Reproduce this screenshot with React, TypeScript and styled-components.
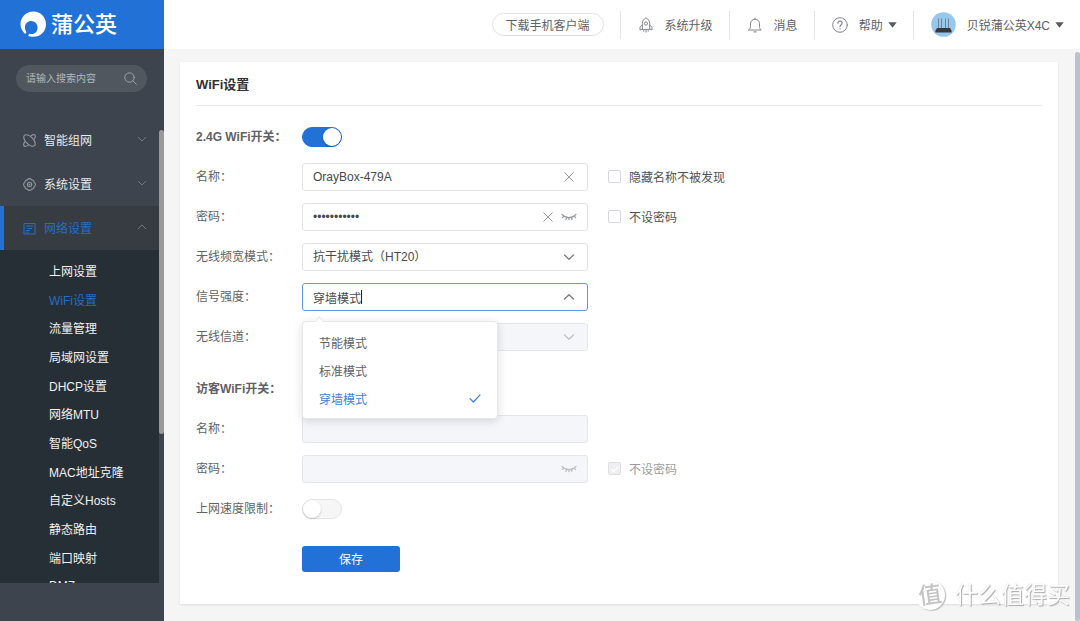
import React, { useState } from "react";
import styled, { createGlobalStyle, css } from "styled-components";

const font = '"Liberation Sans", "Noto Sans CJK SC", sans-serif';
const blue = "#2171d6";

const Global = createGlobalStyle`
  *, *::before, *::after { box-sizing: border-box; }
  body { margin: 0; font-family: ${font}; font-size: 12px; color: #606266; background: #f5f5f5; }
  button, input, select { font: inherit; color: inherit; margin: 0; }
  ul { list-style: none; margin: 0; padding: 0; }
  a { color: inherit; text-decoration: none; }
  svg { display: block; flex: none; }
`;

const Shell = styled.div`
  display: flex;
  height: 100vh;
  overflow: hidden;
`;

/* ---------- sidebar ---------- */

const Sidebar = styled.aside`
  display: flex;
  flex-direction: column;
  flex: none;
  width: 164px;
  background: #3d444d;
`;

const Brand = styled.a`
  display: flex;
  align-items: center;
  gap: 4px;
  flex: none;
  height: 49px;
  padding-left: 20px;
  background: ${blue};
  color: #fff;
  font-size: 22px;
  line-height: 28px;
  font-weight: 500;
`;

const SearchBox = styled.label`
  display: flex;
  align-items: center;
  flex: none;
  height: 27px;
  margin: 16px 17px 26px 16px;
  padding: 0 10px;
  border-radius: 14px;
  background: #50575f;
  color: #9da2a7;
`;

const SearchInput = styled.input`
  flex: 1;
  min-width: 0;
  padding: 0;
  border: 0;
  outline: 0;
  background: none;
  font-size: 10px;
  &::placeholder { color: #b4b8bc; }
`;

const MenuArea = styled.div`
  display: flex;
  flex: 1;
  min-height: 0;
  margin-bottom: 38px;
`;

const Menu = styled.nav`
  flex: 1;
  min-width: 0;
  overflow: hidden;
`;

const MenuTrack = styled.div`
  width: 5px;
  padding-top: 12px;
`;

const MenuThumb = styled.div`
  height: 67%;
  border-radius: 3px;
  background: #999;
`;

const MenuItem = styled.button<{ $active?: boolean }>`
  display: flex;
  align-items: center;
  gap: 8px;
  width: 100%;
  height: 44px;
  padding: 0 12px 2px ${(p) => (p.$active ? 19 : 23)}px;
  border: 0;
  border-left: ${(p) => (p.$active ? `4px solid ${blue}` : "0")};
  background: ${(p) => (p.$active ? "#363c42" : "none")};
  color: ${(p) => (p.$active ? "#286cc8" : "#e8eaec")};
  text-align: left;
`;

const MenuText = styled.span`
  flex: 1;
`;

const MenuIcon = styled.span<{ $active?: boolean }>`
  padding-top: 2px;
  color: ${(p) => (p.$active ? "#286cc8" : "#92979d")};
`;

const MenuArrow = styled.span`
  color: #747b82;
`;

const SubMenu = styled.ul`
  display: flex;
  flex-direction: column;
  height: 350px;
  padding-top: 6px;
  background: #272f36;
`;

const SubItem = styled.li<{ $active?: boolean }>`
  display: flex;
  align-items: center;
  flex: 1;
  padding-left: 49px;
  color: ${(p) => (p.$active ? "#286cc8" : "#f0f1f2")};
`;

/* ---------- top bar ---------- */

const Main = styled.div`
  display: flex;
  flex-direction: column;
  flex: 1;
  min-width: 0;
`;

const TopBar = styled.header`
  display: flex;
  align-items: center;
  justify-content: flex-end;
  flex: none;
  height: 49px;
  background: #fff;
  white-space: nowrap;
`;

const Download = styled.button`
  height: 23px;
  margin-right: 16px;
  padding: 0 13px 1px;
  border: 1px solid #dfe1e4;
  border-radius: 12px;
  background: #fff;
`;

const TopItem = styled.button`
  display: flex;
  align-items: center;
  gap: 11px;
  height: 28px;
  padding: 0 16px 0 17px;
  border: 0;
  border-left: 1px solid #e4e6e9;
  background: none;
`;

const TopIcon = styled.span`
  color: #85878b;
`;

const WithCaret = styled.span`
  display: flex;
  align-items: center;
  gap: 5px;
`;

/* ---------- content ---------- */

const Content = styled.main`
  display: flex;
  flex: 1;
  min-height: 0;
`;

const Scroller = styled.div`
  flex: 1;
  min-width: 0;
  padding: 13px 17px 0 16px;
  overflow: hidden;
`;

const PageTrack = styled.div`
  display: flex;
  width: 5px;
  padding-top: 3px;
`;

const PageThumb = styled.div`
  flex: 1;
  border-radius: 3px;
  background: #b5c4d0;
`;

const Card = styled.section`
  padding: 0 16px 32px;
  background: #fff;
  box-shadow: 0 1px 2px rgba(0, 0, 0, 0.1);
`;

const CardTitle = styled.h1`
  margin: 0 0 17px;
  padding: 13px 0 10px;
  border-bottom: 1px solid #e8eaec;
  color: #303133;
  font-size: 13px;
  line-height: 20px;
  font-weight: 600;
`;

const Form = styled.form`
  display: flex;
  flex-direction: column;
  gap: 12px;
`;

const Row = styled.div<{ $head?: boolean; $guest?: boolean }>`
  display: grid;
  grid-template-columns: 106px minmax(0, 286px) 1fr;
  align-items: center;
  min-height: 28px;
  ${(p) => p.$head && css`font-weight: 600;`}
  ${(p) => p.$guest && css`margin-top: 12px;`}
`;

const RowLabel = styled.label`
  align-self: start;
  line-height: 28px;
`;

const Switch = styled.input`
  appearance: none;
  display: flex;
  width: 40px;
  height: 20px;
  border: 1px solid #e3e4e6;
  border-radius: 10px;
  background: #f6f6f6;
  &::after {
    content: "";
    width: 18px;
    height: 18px;
    border-radius: 50%;
    background: #fff;
    box-shadow: 0 1px 2px rgba(0, 0, 0, 0.2);
  }
  &:checked { justify-content: flex-end; border-color: ${blue}; background: ${blue}; }
`;

const fieldBox = css`
  display: flex;
  align-items: center;
  gap: 5px;
  width: 100%;
  height: 28px;
  padding: 0 10px;
  border: 1px solid #e2e4e8;
  border-radius: 3px;
  background: #fff;
  color: #484a4d;
`;

const Field = styled.div<{ $disabled?: boolean }>`
  ${fieldBox}
  ${(p) => p.$disabled && css`background: #f5f6fa; border-color: #e4e6ec;`}
`;

const TextInput = styled.input`
  flex: 1;
  min-width: 0;
  padding: 0;
  border: 0;
  outline: 0;
  background: none;
`;

const Select = styled.select`
  appearance: none;
  flex: 1;
  min-width: 0;
  padding: 0;
  border: 0;
  outline: 0;
  background: none;
`;

const Combo = styled.div`
  position: relative;
`;

const ComboButton = styled.button`
  ${fieldBox}
  border-color: #5e9ae3;
  text-align: left;
`;

const ComboValue = styled.span`
  display: flex;
  align-items: center;
  flex: 1;
`;

const TextCaret = styled.span`
  width: 1px;
  height: 14px;
  background: #222;
`;

const Suffix = styled.span<{ $light?: boolean }>`
  display: flex;
  justify-content: center;
  width: 16px;
  color: ${(p) => (p.$light ? "#bfc2c7" : "#7d8085")};
`;

const IconButton = styled.button`
  display: flex;
  justify-content: center;
  width: 16px;
  padding: 0;
  border: 0;
  background: none;
  color: #96999e;
  &:disabled { color: #b9bcc2; }
`;

const Popup = styled.ul`
  position: absolute;
  z-index: 2;
  top: calc(100% + 10px);
  left: 0;
  width: 196px;
  padding: 6px 0;
  border: 1px solid #e6e8ec;
  border-radius: 4px;
  background: #fff;
  box-shadow: 0 2px 10px rgba(0, 0, 0, 0.14);
  &::before {
    content: "";
    position: absolute;
    top: -4px;
    left: 13px;
    width: 7px;
    height: 7px;
    border: 1px solid #e6e8ec;
    border-width: 1px 0 0 1px;
    background: #fff;
    transform: rotate(45deg);
  }
`;

const Option = styled.li<{ $on?: boolean }>`
  display: flex;
  align-items: center;
  justify-content: space-between;
  height: 28px;
  padding: 0 16px;
  color: ${(p) => (p.$on ? "#3d7edb" : "#606266")};
`;

const Check = styled.label<{ $disabled?: boolean }>`
  display: flex;
  align-items: center;
  gap: 8px;
  margin-left: 20px;
  padding-bottom: 2px;
  color: ${(p) => (p.$disabled ? "#9a9da1" : "#505256")};
`;

const CheckInput = styled.input`
  appearance: none;
  display: grid;
  place-items: center;
  width: 13px;
  height: 13px;
  border: 1px solid #d5d7db;
  border-radius: 2px;
  background: #fff;
  &:disabled { background: #efefef; border-color: #dddfe2; }
  &:disabled:checked::after {
    content: "";
    width: 4px;
    height: 8px;
    border: 1px solid #fff;
    border-width: 0 1px 1px 0;
    transform: rotate(45deg);
  }
`;

const Save = styled.button`
  width: 98px;
  height: 26px;
  margin: 11px 0 0 106px;
  padding: 0 0 2px;
  border: 0;
  border-radius: 3px;
  background: ${blue};
  color: #fff;
`;

/* ---------- watermark ---------- */

const Watermark = styled.div`
  position: fixed;
  z-index: 3;
  right: 10px;
  bottom: 11px;
  display: flex;
  align-items: center;
  gap: 10px;
  color: #fff;
  font-size: 23px;
  line-height: 30px;
  text-shadow: 1px 1px 1px #aaa, 0 0 1px #ccc;
  pointer-events: none;
`;

const WatermarkBadge = styled.span`
  display: grid;
  place-items: center;
  width: 30px;
  height: 30px;
  border-radius: 50%;
  background: #fff;
  box-shadow: 1px 1px 1px #bbb;
  color: #c4c4c4;
  font-weight: 500;
  text-shadow: none;
  transform: rotate(-8deg);
`;

/* ---------- icons ---------- */

const stroke = { fill: "none", stroke: "currentColor", strokeLinecap: "round", strokeLinejoin: "round" } as const;

const LogoMark = () => (
  <svg width="27" height="27" viewBox="0 0 27 27" aria-hidden="true">
    <path
      fill="#fff"
      d="M13.3.5C20.5.5 26 6 26 13.2S20.5 25.800 13.300 25.800c-2 0-4-.4-5.600-1.100 1-.3 1.400-.9 1.200-2 2.700 1 6 .2 7.600-2.300 2.200-3.400 1-8.300-2.900-9.900C9.600 8.800 5.500 11.500 5 15.500c-.2 2 .4 4.100 1.400 5.400-.2 1-.7 1.500-1.500 1.800C2.300 20.500.500 17 .500 13.200.500 6 6.200.500 13.300.500Z"
    />
  </svg>
);

const SearchIcon = () => (
  <svg width="13" height="13" viewBox="0 0 13 13" {...stroke}>
    <circle cx="5.500" cy="5.500" r="4.700" />
    <path d="m9 9 3.300 3.300" />
  </svg>
);

const Chevron = ({ up = false, size = 12, width = 1.4 }: { up?: boolean; size?: number; width?: number }) => (
  <svg width={size} height={size} viewBox="0 0 12 12" {...stroke} strokeWidth={width}>
    <path d={up ? "M1.5 8 6 3.700 10.500 8" : "M1.5 4 6 8.300 10.500 4"} />
  </svg>
);

const MeshIcon = () => (
  <svg width="13" height="13" viewBox="0 0 13 13" {...stroke} strokeWidth="1.100">
    <ellipse cx="6.500" cy="6.500" rx="7.200" ry="3.700" transform="rotate(45 6.500 6.500)" />
    <path d="M7.900 1.900c1.700-1.200 3.300-1.600 4.100-.9.700.8.400 2.400-.8 4.100M5.100 11.100c-1.700 1.200-3.300 1.600-4.100.9-.7-.8-.4-2.400.8-4.100" />
  </svg>
);

const GearIcon = () => (
  <svg width="13" height="13" viewBox="0 0 13 13" {...stroke} strokeWidth="1.100">
    <path d="M5.200.9 6.500.6l1.300.3.8 1 1.300.2 1 1 .2 1.200 1 .9.300 1.300-.3 1.300-1 .9-.2 1.200-1 1-1.300.2-.8 1-1.300.3-1.300-.3-.8-1-1.300-.2-1-1-.2-1.200-1-.9-.3-1.300.3-1.300 1-.9.200-1.200 1-1 1.300-.2Z" />
    <circle cx="6.500" cy="6.500" r="2.200" />
    <circle cx="6.500" cy="6.500" r=".4" />
  </svg>
);

const NetIcon = () => (
  <svg width="13" height="13" viewBox="0 0 13 13" {...stroke} strokeLinecap="butt">
    <path d="M1 1.500h11v10.500H1zM3 4h7M4.500 6.500H9M3 8.500h4M3 10.200h2.500" />
  </svg>
);

const RocketIcon = () => (
  <svg width="16" height="16" viewBox="0 0 16 16" {...stroke}>
    <path d="M4.300 12V6.500C4.300 4 6 1.800 8 .8c2 1 3.700 3.200 3.700 5.700V12ZM4.300 7.800 2 10.300V13l2.300-1M11.700 7.800 14 10.300V13l-2.300-1M5.800 13.500v.8M8 13.500v1.700M10.200 13.500v.8" />
    <circle cx="8" cy="6.500" r="1.600" />
  </svg>
);

const BellIcon = () => (
  <svg width="16" height="16" viewBox="0 0 16 16" {...stroke}>
    <path d="M1.800 13h12.400c-1.200-1-1.700-2-1.700-3.500v-2.700c0-2.600-1.900-4.600-4.500-4.600S3.500 4.200 3.500 6.800v2.700c0 1.500-.5 2.500-1.700 3.500ZM8 1v1.200M6.700 14.900h2.600" />
  </svg>
);

const HelpIcon = () => (
  <svg width="16" height="16" viewBox="0 0 16 16" {...stroke}>
    <circle cx="8" cy="8" r="7.300" />
    <path d="M5.900 6.300c0-1.300.9-2.200 2.100-2.200s2.100.8 2.100 2c0 1.600-2.100 1.700-2.100 3.500M8 11.500v.3" strokeWidth="1.200" />
  </svg>
);

const Triangle = () => (
  <svg width="9" height="6" viewBox="0 0 9 6" fill="#5a5c60">
    <path d="M.3.300h8.400L4.500 5.800z" />
  </svg>
);

const RouterAvatar = () => (
  <svg width="25" height="25" viewBox="0 0 25 25">
    <circle cx="12.500" cy="12.500" r="12.300" fill="#96c8ee" />
    <path d="M7.500 6.500v10M10.500 6.500v10M14.500 6.500v10M17.500 6.500v10" stroke="#6f8596" />
    <path d="M6 16h13l1.600 2.800v1.700H4.400v-1.700z" fill="#35393e" />
  </svg>
);

const CloseIcon = () => (
  <svg width="10" height="10" viewBox="0 0 10 10" {...stroke}>
    <path d="m.7.700 8.600 8.600M9.300.700.700 9.300" />
  </svg>
);

const ClosedEye = () => (
  <svg width="16" height="8" viewBox="0 0 16 8" {...stroke} strokeWidth="1.200">
    <path d="M1 1.300C3 3.600 5.300 4.600 8 4.600s5-1 7-3.300M2.800 3.200 1.300 4.700M5.700 4.400 5 6.500M8 4.700v2M10.300 4.400l.7 2.100M13.200 3.200l1.500 1.500" />
  </svg>
);

const Tick = () => (
  <svg width="12" height="9" viewBox="0 0 12 9" {...stroke} strokeWidth="1.200">
    <path d="m1 4.600 3.400 3.400L11 .900" />
  </svg>
);

/* ---------- data ---------- */

const subItems = [
  "上网设置", "WiFi设置", "流量管理", "局域网设置", "DHCP设置", "网络MTU",
  "智能QoS", "MAC地址克隆", "自定义Hosts", "静态路由", "端口映射", "DMZ",
];

const strengths = ["节能模式", "标准模式", "穿墙模式"];

export default function App() {
  const [name, setName] = useState("OrayBox-479A");
  const [password, setPassword] = useState("12345678901");
  const [strength, setStrength] = useState("穿墙模式");
  const [open, setOpen] = useState(true);

  return (
    <Shell>
      <Global />
      <Sidebar>
        <Brand href="#"><LogoMark />蒲公英</Brand>
        <SearchBox>
          <SearchInput placeholder="请输入搜索内容" aria-label="请输入搜索内容" />
          <SearchIcon />
        </SearchBox>
        <MenuArea>
          <Menu>
            <MenuItem>
              <MenuIcon><MeshIcon /></MenuIcon>
              <MenuText>智能组网</MenuText>
              <MenuArrow><Chevron size={10} width={1.2} /></MenuArrow>
            </MenuItem>
            <MenuItem>
              <MenuIcon><GearIcon /></MenuIcon>
              <MenuText>系统设置</MenuText>
              <MenuArrow><Chevron size={10} width={1.2} /></MenuArrow>
            </MenuItem>
            <MenuItem $active>
              <MenuIcon $active><NetIcon /></MenuIcon>
              <MenuText>网络设置</MenuText>
              <MenuArrow><Chevron up size={10} width={1.2} /></MenuArrow>
            </MenuItem>
            <SubMenu>
              {subItems.map((t) => (
                <SubItem key={t} $active={t === "WiFi设置"}><a href="#">{t}</a></SubItem>
              ))}
            </SubMenu>
          </Menu>
          <MenuTrack><MenuThumb /></MenuTrack>
        </MenuArea>
      </Sidebar>

      <Main>
        <TopBar>
          <Download>下载手机客户端</Download>
          <TopItem><TopIcon><RocketIcon /></TopIcon>系统升级</TopItem>
          <TopItem><TopIcon><BellIcon /></TopIcon>消息</TopItem>
          <TopItem><TopIcon><HelpIcon /></TopIcon><WithCaret>帮助<Triangle /></WithCaret></TopItem>
          <TopItem><RouterAvatar /><WithCaret>贝锐蒲公英X4C<Triangle /></WithCaret></TopItem>
        </TopBar>
        <Content>
          <Scroller>
            <Card>
              <CardTitle>WiFi设置</CardTitle>
              <Form onSubmit={(e) => e.preventDefault()}>
                <Row $head>
                  <RowLabel htmlFor="wifi">2.4G WiFi开关：</RowLabel>
                  <Switch id="wifi" type="checkbox" role="switch" defaultChecked />
                </Row>
                <Row>
                  <RowLabel htmlFor="name">名称：</RowLabel>
                  <Field>
                    <TextInput id="name" value={name} onChange={(e) => setName(e.target.value)} />
                    <IconButton type="button" aria-label="清除名称" onClick={() => setName("")}><CloseIcon /></IconButton>
                  </Field>
                  <Check><CheckInput type="checkbox" />隐藏名称不被发现</Check>
                </Row>
                <Row>
                  <RowLabel htmlFor="pwd">密码：</RowLabel>
                  <Field>
                    <TextInput id="pwd" type="password" value={password} onChange={(e) => setPassword(e.target.value)} />
                    <IconButton type="button" aria-label="清除密码" onClick={() => setPassword("")}><CloseIcon /></IconButton>
                    <IconButton type="button" aria-label="显示密码"><ClosedEye /></IconButton>
                  </Field>
                  <Check><CheckInput type="checkbox" />不设密码</Check>
                </Row>
                <Row>
                  <RowLabel htmlFor="band">无线频宽模式：</RowLabel>
                  <Field>
                    <Select id="band"><option>抗干扰模式（HT20）</option></Select>
                    <Suffix><Chevron /></Suffix>
                  </Field>
                </Row>
                <Row>
                  <RowLabel htmlFor="strength">信号强度：</RowLabel>
                  <Combo>
                    <ComboButton
                      id="strength"
                      type="button"
                      aria-haspopup="listbox"
                      aria-expanded={open}
                      onClick={() => setOpen(!open)}
                    >
                      <ComboValue>{strength}<TextCaret /></ComboValue>
                      <Suffix><Chevron up={open} /></Suffix>
                    </ComboButton>
                    {open && (
                      <Popup role="listbox" aria-label="信号强度">
                        {strengths.map((s) => (
                          <Option
                            key={s}
                            role="option"
                            aria-selected={s === strength}
                            $on={s === strength}
                            onClick={() => { setStrength(s); setOpen(false); }}
                          >
                            {s}
                            {s === strength && <Tick />}
                          </Option>
                        ))}
                      </Popup>
                    )}
                  </Combo>
                </Row>
                <Row>
                  <RowLabel htmlFor="channel">无线信道：</RowLabel>
                  <Field $disabled>
                    <Select id="channel" disabled />
                    <Suffix $light><Chevron /></Suffix>
                  </Field>
                </Row>
                <Row $head $guest>
                  <RowLabel htmlFor="guest">访客WiFi开关：</RowLabel>
                  <Switch id="guest" type="checkbox" role="switch" />
                </Row>
                <Row>
                  <RowLabel htmlFor="guest-name">名称：</RowLabel>
                  <Field $disabled><TextInput id="guest-name" disabled /></Field>
                </Row>
                <Row>
                  <RowLabel htmlFor="guest-pwd">密码：</RowLabel>
                  <Field $disabled>
                    <TextInput id="guest-pwd" type="password" disabled />
                    <IconButton type="button" aria-label="显示访客密码" disabled><ClosedEye /></IconButton>
                  </Field>
                  <Check $disabled><CheckInput type="checkbox" defaultChecked disabled />不设密码</Check>
                </Row>
                <Row>
                  <RowLabel htmlFor="limit">上网速度限制：</RowLabel>
                  <Switch id="limit" type="checkbox" role="switch" />
                </Row>
                <Save type="submit">保存</Save>
              </Form>
            </Card>
          </Scroller>
          <PageTrack><PageThumb /></PageTrack>
        </Content>
      </Main>

      <Watermark><WatermarkBadge>值</WatermarkBadge>什么值得买</Watermark>
    </Shell>
  );
}
